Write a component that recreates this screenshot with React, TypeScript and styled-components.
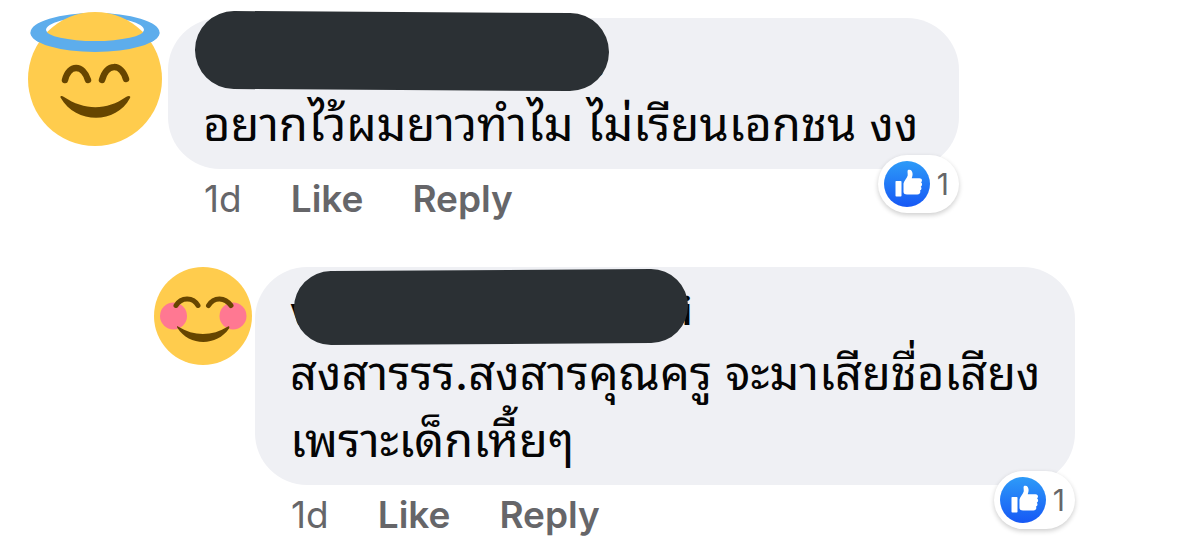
import React from "react";
import styled, { createGlobalStyle } from "styled-components";

const GlobalStyle = createGlobalStyle`
  body {
    margin: 0;
    background: #ffffff;
    color: #050505;
    font-family: Inter, Thonburi, "Noto Sans Thai Looped", Loma, Waree, Garuda, "Noto Sans", sans-serif;
  }
`;

const Thread = styled.main`
  display: flex;
  flex-direction: column;
  gap: 40px;
  padding: 12px 28px 4px;
`;

const CommentRow = styled.article<{ $reply?: boolean }>`
  display: flex;
  align-items: flex-start;
  gap: ${(p) => (p.$reply ? 3 : 6)}px;
  padding-left: ${(p) => (p.$reply ? 126 : 0)}px;
`;

const Avatar = styled.svg<{ $size: number }>`
  display: block;
  flex: none;
  width: ${(p) => p.$size}px;
  height: ${(p) => p.$size}px;
  overflow: visible;
`;

const Body = styled.div<{ $width: number; $top: number }>`
  flex: 0 1 ${(p) => p.$width}px;
  min-width: 0;
  padding-top: ${(p) => p.$top}px;
`;

const Bubble = styled.div`
  position: relative;
  padding: 12px 24px 12px 35px;
  border-radius: 52px;
  background: #eff0f4;
`;

const Name = styled.div<{ $width: number }>`
  position: relative;
  display: flex;
  justify-content: space-between;
  width: ${(p) => p.$width}px;
  height: 60px;
  font-size: 38px;
  line-height: 64px;
  font-weight: 600;
`;

const Redaction = styled.svg`
  position: absolute;
  left: -11px;
  top: -20px;
  width: 420px;
  height: 88px;
`;

const Message = styled.p`
  margin: 0;
  font-size: 47px;
  line-height: 67px;
`;

const Meta = styled.footer`
  display: flex;
  align-items: center;
  gap: 49px;
  padding: 0 36px;
  height: 58px;
  color: #666669;
  font-size: 37px;
`;

const Action = styled.button`
  padding: 0;
  border: 0;
  background: none;
  color: inherit;
  font: inherit;
  font-weight: 600;
  cursor: pointer;
`;

const Reactions = styled.button`
  position: absolute;
  right: 0;
  bottom: -44px;
  display: flex;
  align-items: center;
  gap: 7px;
  height: 58px;
  padding: 0 10px 0 6px;
  border: 0;
  border-radius: 29px;
  background: #ffffff;
  box-shadow: 0 2px 5px rgba(0, 0, 0, 0.2);
  color: #666669;
  font-family: inherit;
  font-size: 30px;
  cursor: pointer;
`;

const ThumbIcon = styled.svg`
  display: block;
  width: 46px;
  height: 46px;
`;

const HaloFace = () => (
  <Avatar $size={134} viewBox="0 0 134 134" role="img" aria-label="Profile picture">
    <path
      fill="#5dadec"
      fillRule="evenodd"
      d="M2.5 20.5a64.5 19.5 0 0 1 129 0a64.5 19.5 0 0 1-129 0ZM18 18a49 11 0 0 0 98 0a49 13 0 0 0-98 0Z"
    />
    <circle cx="67" cy="67" r="67" fill="#ffcc4d" />
    <path
      fill="#5dadec"
      d="M2.5 20.5a64.5 19.5 0 0 0 129 0L116 18a49 11 0 0 1-98 0Z"
    />
    <g fill="none" stroke="#664500" strokeWidth="6.5" strokeLinecap="round">
      <path d="M37 68C41 52 55 52 60 68" />
      <path d="M74 68C79 51 93 51 98 67" />
    </g>
    <path
      fill="#664500"
      d="M32.5 85.5C32 83.5 34 83.5 36 85C56 98.5 79 98.5 98 85C101 83 103 84 102 86C88 112.5 48 112.5 32.5 85.5Z"
    />
  </Avatar>
);

const BlushFace = () => (
  <Avatar $size={98} viewBox="0 0 98 98" role="img" aria-label="Profile picture">
    <circle cx="49" cy="49" r="49" fill="#ffcc4d" />
    <circle cx="19.5" cy="49" r="13.5" fill="#ff7892" />
    <circle cx="79" cy="49" r="13.5" fill="#ff7892" />
    <g fill="none" stroke="#664500" strokeWidth="5" strokeLinecap="round">
      <path d="M22 38.5C27 30 39 29.5 44 38.5" />
      <path d="M54.5 38.5C60 29.5 71 30 77 38.5" />
    </g>
    <path
      fill="#664500"
      d="M24 59.5C40 69.5 58 69.5 74 59.5C75 59 76 60 75 61.5C63 79.5 35 79.5 23.5 61C22.5 59.5 23 59 24 59.5Z"
    />
  </Avatar>
);

const LikeBadge = ({ count, id }: { count: number; id: string }) => (
  <Reactions aria-label={`${count} like`}>
    <ThumbIcon viewBox="0 0 46 46" aria-hidden="true">
      <defs>
        <linearGradient id={id} x1="0" y1="0" x2="0" y2="1">
          <stop offset="0" stopColor="#2d9bf8" />
          <stop offset="1" stopColor="#1658f5" />
        </linearGradient>
      </defs>
      <circle cx="23" cy="23" r="23" fill={`url(#${id})`} />
      <rect x="11.5" y="20" width="6" height="15.5" rx="0.8" fill="#fff" />
      <path
        fill="#fff"
        d="M19.5 22.5C20 19.5 23 17.5 23.7 14.5C24 12 22.8 9.5 24.5 8.8C27 8 28.6 10.5 28.6 13C28.6 15 28 16 27.8 17.2H35.5C38.5 17.2 38.5 20.5 37 21.3C38.7 22.5 38.3 25 36.8 25.7C38 27 37.5 29 36 29.6C37 32 35.5 33.5 33.5 33.5H23C21 33.5 19.5 32.7 19.5 31Z"
      />
    </ThumbIcon>
    <span>{count}</span>
  </Reactions>
);

const Actions = () => (
  <Meta>
    <time>1d</time>
    <Action>Like</Action>
    <Action>Reply</Action>
  </Meta>
);

export default function App() {
  return (
    <>
      <GlobalStyle />
      <Thread>
        <CommentRow>
          <HaloFace />
          <Body $width={791} $top={6}>
            <Bubble>
              <Name $width={402}>
                <span />
                <span>.</span>
                <Redaction viewBox="0 0 420 88" aria-hidden="true">
                  <path d="M42 40L378 42" stroke="#2b3034" strokeWidth="78" strokeLinecap="round" />
                </Redaction>
              </Name>
              <Message>อยากไว้ผมยาวทำไม ไม่เรียนเอกชน งง</Message>
              <LikeBadge count={1} id="like-first" />
            </Bubble>
            <Actions />
          </Body>
        </CommentRow>
        <CommentRow $reply>
          <BlushFace />
          <Body $width={820} $top={0}>
            <Bubble>
              <Name $width={402}>
                <span>v</span>
                <span>i</span>
                <Redaction viewBox="0 0 420 88" aria-hidden="true">
                  <path d="M52 49L372 47" stroke="#2b3034" strokeWidth="74" strokeLinecap="round" />
                </Redaction>
              </Name>
              <Message>
                สงสารรร.สงสารคุณครู จะมาเสียชื่อเสียง
                <br />
                เพราะเด็กเหี้ยๆ
              </Message>
              <LikeBadge count={1} id="like-reply" />
            </Bubble>
            <Actions />
          </Body>
        </CommentRow>
      </Thread>
    </>
  );
}
